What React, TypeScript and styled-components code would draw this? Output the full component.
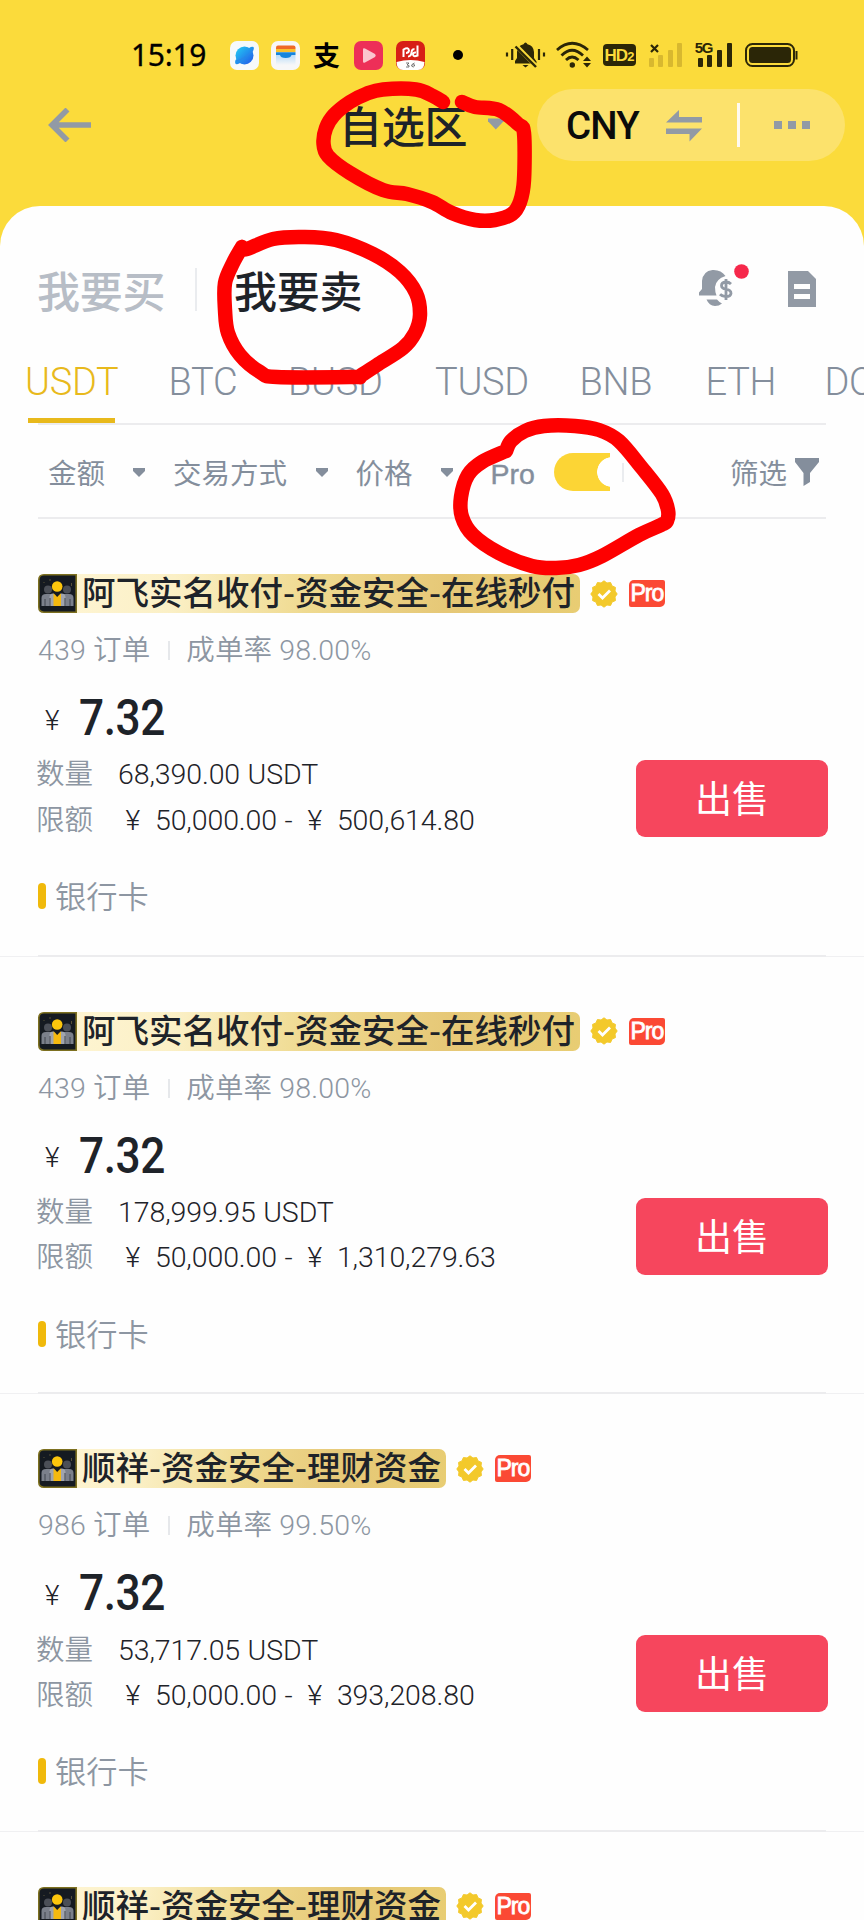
import React from 'react';
import styled, { createGlobalStyle } from 'styled-components';

const latin = `Roboto, "Noto Sans CJK SC", sans-serif`;
const cjk = `"Noto Sans CJK SC", sans-serif`;

const GlobalStyle = createGlobalStyle`
  * { box-sizing: border-box; }
  body { margin: 0; background: #fbdb3b; }
`;

const Screen = styled.div`
  position: relative;
  width: 864px;
  height: 1920px;
  overflow: hidden;
  background: #fbdb3b;
  font-family: ${latin};
  color: #1e2329;
  white-space: nowrap;
`;

/* ---------- status bar ---------- */
const StatusBar = styled.div`
  display: flex;
  align-items: center;
  height: 72px;
  padding: 38px 0 0 131px;
`;
const Clock = styled.div`
  width: 98.5px;
  font: 400 30px/34px "Noto Sans", sans-serif;
  -webkit-text-stroke: 0.3px #000;
  letter-spacing: -0.3px;
  color: #000;
`;
const StatusIcon = styled.svg<{ $gap?: number }>`
  flex: none;
  display: block;
  overflow: visible;
  margin-left: ${(p) => p.$gap ?? 0}px;
`;
const NoSim = styled.svg`
  position: absolute;
  left: 1px;
  top: 1px;
`;
const PayGlyph = styled.div`
  width: 30px;
  margin-left: 13px;
  font: 700 27px/30px ${cjk};
  color: #000;
`;
const HdBadge = styled.div`
  display: flex;
  align-items: baseline;
  justify-content: center;
  width: 33px;
  height: 22px;
  margin-left: 11px;
  border-radius: 4px;
  background: #2b2607;
  color: #fbdb3b;
  font: 700 17px/23px "Liberation Sans", sans-serif;
  letter-spacing: -1px;
`;
const HdDigit = styled.span`
  font-size: 13px;
`;
const Signal = styled.div<{ $dim?: boolean; $gap: number }>`
  position: relative;
  display: flex;
  align-items: flex-end;
  gap: 4.6px;
  height: 24px;
  margin-left: ${(p) => p.$gap}px;
  color: ${(p) => (p.$dim ? '#d8b82f' : '#2b2607')};
`;
const Bar = styled.i<{ $h: number }>`
  width: 5px;
  height: ${(p) => p.$h}px;
  border-radius: 1px;
  background: currentColor;
`;
const SignalTag = styled.span`
  position: absolute;
  left: -3px;
  top: -2px;
  font: 700 15px/14px "Liberation Sans", sans-serif;
  letter-spacing: -1.4px;
  color: #2b2607;
`;

/* ---------- header ---------- */
const Header = styled.div`
  display: flex;
  align-items: center;
  height: 134px;
  padding: 0 19px 28px 48px;
`;
const Title = styled.div`
  display: flex;
  align-items: center;
  width: 165px;
  height: 52px;
  margin-left: 248px;
  padding-bottom: 3px;
  gap: 21px;
  font: 500 43px/50px ${cjk};
  letter-spacing: -0.2px;
`;
const Pill = styled.div`
  display: flex;
  align-items: center;
  width: 308px;
  height: 72px;
  margin-left: auto;
  padding-left: 29px;
  border-radius: 36px;
  background: #fce26c;
`;
const Currency = styled.div`
  width: 98.5px;
  padding-top: 2px;
  font: 500 38.5px/70px ${latin};
  letter-spacing: -0.8px;
  color: #0b0b0b;
`;
const PillRule = styled.i`
  width: 3px;
  height: 44px;
  margin-left: 34px;
  background: #fffaf0;
`;
const Dots = styled.div`
  display: flex;
  gap: 6px;
  margin-left: 34.5px;
`;
const Dot = styled.i`
  width: 8px;
  height: 8px;
  background: #929aa5;
`;

/* ---------- sheet ---------- */
const Sheet = styled.main`
  height: 1714px;
  border-radius: 40px 40px 0 0;
  background: #fefefe;
`;
const SideTabs = styled.div`
  display: flex;
  align-items: center;
  height: 138px;
  padding: 28px 48px 0 37px;
`;
const SideTab = styled.div<{ $on?: boolean }>`
  width: 128px;
  font: 500 43px/50px ${cjk};
  letter-spacing: -0.2px;
  color: ${(p) => (p.$on ? '#1e2329' : '#b7bdc6')};
`;
const SideRule = styled.i`
  width: 2px;
  height: 43px;
  margin: 0 37px 0 30px;
  background: #eaecef;
`;
const SideIcons = styled.div`
  display: flex;
  align-items: flex-start;
  gap: 37px;
  margin: -7px 0 0 auto;
`;
const DocIcon = styled.svg`
  margin-top: 7px;
`;
const CoinTabs = styled.div`
  display: flex;
  height: 79px;
  padding-left: 25px;
`;
const CoinTab = styled.div<{ $on?: boolean; $w: number }>`
  flex: none;
  width: ${(p) => p.$w}px;
  padding-top: 16px;
  font: 300 38px/44px ${latin};
  letter-spacing: -0.3px;
  color: ${(p) => (p.$on ? '#e8b91c' : '#848e9c')};
`;
const Underline = styled.i`
  display: block;
  width: 87px;
  height: 5px;
  margin: 14px 0 0 3px;
  background: #e8b91c;
`;
const Rule = styled.hr`
  height: 2px;
  margin: 0 38px;
  border: 0;
  background: #ececee;
`;
const Filters = styled.div`
  display: flex;
  align-items: center;
  height: 92px;
  padding: 2px 45px 0 48px;
  font: 400 28.5px/40px ${cjk};
  color: #848e9c;
`;
const Filter = styled.div<{ $w: number }>`
  display: flex;
  align-items: center;
  justify-content: space-between;
  width: ${(p) => p.$w}px;
  margin-right: 28px;
`;
const ProLabel = styled.div`
  width: 63px;
  margin-left: 10px;
  padding-top: 4px;
  font: 400 28.5px/40px "Liberation Sans", sans-serif;
  -webkit-text-stroke: 0.4px #848e9c;
`;
const Toggle = styled.div`
  width: 56px;
  height: 38px;
  border-radius: 19px 0 0 19px;
  background: radial-gradient(circle at 58px 19px, #fff 14.5px, #fcd535 15.2px);
`;
const FilterRule = styled.i`
  width: 2px;
  height: 19px;
  margin-left: 12px;
  background: #eaecef;
`;
const FilterButton = styled.div`
  display: flex;
  align-items: center;
  gap: 8px;
  margin-left: auto;
`;

/* ---------- offers ---------- */
const Offer = styled.section`
  height: 437.67px;
  padding: 55px 36px 0 38px;
  border-bottom: 1px solid #f0f0f2;
`;
const NameRow = styled.div`
  display: flex;
  align-items: center;
  height: 39px;
`;
const NameBadge = styled.div`
  display: flex;
  align-items: center;
  height: 39px;
  padding-right: 5.5px;
  border-radius: 7px;
  background: linear-gradient(100deg, #fff6d6 0%, #fbf0c6 25%, #efda90 50%, #e6c877 75%, #e8cd73 100%);
`;
const Name = styled.span`
  height: 39px;
  font: 500 33.5px/33px ${cjk};
`;
const BadgeIcon = styled.svg`
  flex: none;
  margin-right: 5px;
`;
const Verified = styled.svg`
  margin-left: 10px;
`;
const ProTag = styled.span`
  width: 36px;
  height: 27px;
  margin-left: 10.5px;
  border-radius: 5px 2px 5px 2px;
  background: #fb4934;
  color: #fff;
  text-align: center;
  font: 400 23px/27px "Liberation Sans", sans-serif;
  -webkit-text-stroke: 0.8px #fff;
  letter-spacing: -1px;
`;
const Stats = styled.div`
  display: flex;
  align-items: center;
  height: 41px;
  margin-top: 17px;
  font: 350 28.5px/41px ${latin};
  letter-spacing: 0.15px;
  color: #8d96a2;
`;
const StatRule = styled.i`
  width: 2px;
  height: 19px;
  margin: 0 16px 0 18px;
  background: #e6e8eb;
`;
const Price = styled.div`
  display: flex;
  align-items: center;
  height: 58px;
  margin-top: 18px;
  padding-left: 7px;
`;
const Yen = styled.span`
  width: 34px;
  font: 350 28px/50px ${latin};
  padding-top: 5px;
`;
const PriceValue = styled.span`
  font: 500 50.5px/58px ${latin};
  letter-spacing: -0.5px;
  transform: scaleX(0.875);
  transform-origin: left;
`;
const Body = styled.div`
  display: flex;
  justify-content: space-between;
  margin: 5px 0 0 -2px;
`;
const Fact = styled.div`
  display: flex;
  align-items: center;
  height: 45.5px;
  font: 350 28.5px/45px ${latin};
`;
const FactLabel = styled.span`
  width: 82px;
  color: #8d96a2;
`;
const Amount = styled.span`
  letter-spacing: -0.1px;
  word-spacing: 0.6px;
  white-space: pre;
`;
const SellButton = styled.button`
  width: 192px;
  height: 77px;
  margin-top: 8px;
  padding: 0 0 3px;
  border: 0;
  border-radius: 9px;
  background: #f6465d;
  color: #fff;
  font: 400 37px/74px ${cjk};
`;
const Payment = styled.div`
  display: flex;
  align-items: center;
  height: 40px;
  margin-top: 33px;
  font: 350 31.2px/37px ${cjk};
  color: #8d96a2;
`;
const PaymentName = styled.span`
  height: 40px;
`;
const PaymentMark = styled.i`
  width: 8px;
  height: 26px;
  margin-right: 9px;
  border-radius: 4px;
  background: #f0b90b;
`;
const OfferRule = styled.hr`
  width: 788px;
  height: 2px;
  margin: 38.5px 0 0;
  border: 0;
  background: #ececee;
`;

/* ---------- hand-drawn marks ---------- */
const Marks = styled.svg`
  position: absolute;
  inset: 0;
  pointer-events: none;
`;

type Pt = [number, number];
const smooth = (p: Pt[]) =>
  p.slice(0, -1).reduce((d, b, i) => {
    const a = p[i - 1] ?? b;
    const c = p[i + 1];
    const e = p[i + 2] ?? c;
    return `${d}C${b[0] + (c[0] - a[0]) / 6} ${b[1] + (c[1] - a[1]) / 6} ${c[0] - (e[0] - b[0]) / 6} ${c[1] - (e[1] - b[1]) / 6} ${c[0]} ${c[1]}`;
  }, `M${p[0][0]} ${p[0][1]}`);

const strokes: Pt[][] = [
  [[443, 102], [433, 96], [416, 89.5], [383, 89.5], [366, 94], [350, 102], [334, 115], [326, 128], [323.5, 143], [328, 156], [350, 173], [383, 190], [407, 194], [432, 202], [452, 213], [475, 220], [495, 220], [512, 214], [520, 202], [524, 180], [524, 133], [518, 124], [499, 110], [475, 107], [462, 102]],
  [[242, 247], [247, 249], [273, 239], [303, 237], [336, 240], [373, 254], [400, 272], [416, 293], [420, 315], [415, 333], [403, 348], [377, 365], [360, 376], [353, 377], [277, 377], [260, 372], [240, 355], [228, 333], [225, 310], [225, 283], [233, 263], [242, 247]],
  [[506, 451], [511, 441], [525, 431], [544, 426], [575, 426], [599, 430], [619, 441], [642, 468], [662, 494], [668, 510], [667, 521], [661, 525], [639, 535], [602, 556], [579, 565], [556, 568], [532, 566], [499, 553], [473, 535], [462, 517], [461, 497], [468, 475], [482, 462], [506, 451]],
];

const Caret = () => (
  <svg width="12" height="9" viewBox="0 0 12 9">
    <path d="M0 0H12V3L6 9L0 3Z" fill="currentColor" />
  </svg>
);

const PeopleIcon = () => (
  <BadgeIcon width="39" height="39" viewBox="0 0 39 39">
    <path d="M38.200 0.800H6Q0.800 0.800 0.800 6V33Q0.800 38.200 6 38.200H38.200Z" fill="#151a21" stroke="#7d7020" strokeWidth="1.600" />
    <circle cx="10" cy="15.500" r="4" fill="#4b4f57" />
    <circle cx="29" cy="15.500" r="4" fill="#4b4f57" />
    <path d="M3.500 32V24Q3.500 20 8 20H14V32ZM25 32V20H31Q35.500 20 35.500 24V32Z" fill="#7b808b" />
    <path d="M11.500 32V23.500Q11.500 19.500 15 19.500H23.500Q27.500 19.500 27.500 23.500V32Z" fill="#a0a4ad" />
    <path d="M15.500 32V19.500H23V32Z" fill="#f5b90f" />
    <path d="M15.500 19L19.200 23L23 19Z" fill="#151a21" />
    <path d="M7 25V32M32 25V32M12 24V32M27 24V32" stroke="#3a3e47" strokeWidth="0.9" />
    <circle cx="19.200" cy="12.500" r="5.300" fill="#fdc60c" />
    <path d="M12 5v2M33.500 9v3M6 8v1" stroke="#565038" strokeWidth="1" />
  </BadgeIcon>
);

const scallop = Array.from({ length: 24 }, (_, i) => {
  const r = i % 2 ? 11.4 : 13.2;
  const a = (i * Math.PI) / 12;
  return `${14 + r * Math.sin(a)},${14 - r * Math.cos(a)}`;
}).join(' ');

const VerifiedIcon = () => (
  <Verified width="28" height="28" viewBox="0 0 28 28">
    <polygon points={scallop} fill="#f3c92b" stroke="#f3c92b" strokeLinejoin="round" />
    <path d="M8.500 14L12.500 18L20 10.500" fill="none" stroke="#fff" strokeWidth="2.800" />
  </Verified>
);

interface OfferData {
  name: string;
  orders: string;
  rate: string;
  amount: string;
  max: string;
}
const offers: OfferData[] = [
  { name: '阿飞实名收付-资金安全-在线秒付', orders: '439', rate: '98.00%', amount: '68,390.00', max: '500,614.80' },
  { name: '阿飞实名收付-资金安全-在线秒付', orders: '439', rate: '98.00%', amount: '178,999.95', max: '1,310,279.63' },
  { name: '顺祥-资金安全-理财资金', orders: '986', rate: '99.50%', amount: '53,717.05', max: '393,208.80' },
];
const nextOffer = '顺祥-资金安全-理财资金';

const OfferName = ({ name }: { name: string }) => (
  <NameRow>
    <NameBadge>
      <PeopleIcon />
      <Name>{name}</Name>
    </NameBadge>
    <VerifiedIcon />
    <ProTag>Pro</ProTag>
  </NameRow>
);

const OfferCard = ({ o }: { o: OfferData }) => (
  <Offer>
    <OfferName name={o.name} />
    <Stats>
      {o.orders} 订单
      <StatRule />
      成单率 {o.rate}
    </Stats>
    <Price>
      <Yen>¥</Yen>
      <PriceValue>7.32</PriceValue>
    </Price>
    <Body>
      <div>
        <Fact>
          <FactLabel>数量</FactLabel>
          <Amount>{o.amount} USDT</Amount>
        </Fact>
        <Fact>
          <FactLabel>限额</FactLabel>
          <Amount>{` ¥  50,000.00 -  ¥  ${o.max}`}</Amount>
        </Fact>
      </div>
      <SellButton>出售</SellButton>
    </Body>
    <Payment>
      <PaymentMark />
      <PaymentName>银行卡</PaymentName>
    </Payment>
    <OfferRule />
  </Offer>
);

const coins: [string, number][] = [
  ['USDT', 143.5], ['BTC', 119.5], ['BUSD', 147], ['TUSD', 144.5], ['BNB', 126], ['ETH', 119], ['DO', 60],
];

export default function App() {
  return (
    <Screen>
      <GlobalStyle />
      <StatusBar>
        <Clock>15:19</Clock>
        <StatusIcon width="29" height="29" viewBox="0 0 29 29">
          <defs>
            <linearGradient id="planet" x1="0" y1="0" x2="1" y2="1">
              <stop offset="0" stopColor="#24d0f3" />
              <stop offset="1" stopColor="#2054e8" />
            </linearGradient>
          </defs>
          <rect width="29" height="29" rx="7" fill="#f6f9fb" />
          <circle cx="14.500" cy="14.500" r="9" fill="url(#planet)" />
          <path d="M5.500 19Q4 24 8 23Q16 20 20.500 14Q25 8 23.500 6Q22 5 19 7" fill="url(#planet)" />
          <path d="M6 20Q15 18 23 9" stroke="#2b86e8" strokeWidth="1" fill="none" />
        </StatusIcon>
        <StatusIcon $gap={12.5} width="29" height="29" viewBox="0 0 29 29">
          <defs>
            <linearGradient id="mist" x1="0" y1="0" x2="0" y2="1">
              <stop offset="0" stopColor="#b9dcf8" />
              <stop offset="1" stopColor="#f7f7f8" />
            </linearGradient>
          </defs>
          <rect width="29" height="29" rx="7" fill="#f7f7f8" />
          <path d="M5 14H24.500V24H5Z" fill="url(#mist)" />
          <path d="M5 8V6.500Q5 4.500 7 4.500H22.500Q24.500 4.500 24.500 6.500V8Z" fill="#ef6a26" />
          <rect x="5" y="8" width="19.500" height="3.200" fill="#f8c12c" />
          <path d="M5 11.200H24.500V14H20.500Q20 17 14.700 17Q9.500 17 9 14H5Z" fill="#1685dc" />
        </StatusIcon>
        <PayGlyph>支</PayGlyph>
        <StatusIcon $gap={11} width="29" height="29" viewBox="0 0 29 29">
          <rect width="29" height="29" rx="7" fill="#ed2f58" />
          <path d="M9 8.500Q9 6.500 11 7.500L21 13Q22.500 14.500 21 16L11 21.500Q9 22.500 9 20.500Z" fill="#fbc5cf" />
        </StatusIcon>
        <StatusIcon $gap={13} width="29" height="29" viewBox="0 0 29 29">
          <rect width="29" height="29" rx="7" fill="#d71f16" />
          <path d="M0.500 21Q14.500 17 28.500 21Q28 29 22 29H7Q1 29 0.500 21Z" fill="#fff" />
          <path d="M7.500 16V8.500Q12.500 5.500 13 9.500Q12.500 12 10 12M12 15.500Q15 15.500 15.500 11.500Q16 7.500 18.500 8.500M21.500 4.500V14.500Q17 16.500 17 13Q17.500 11 20 11.500" fill="none" stroke="#fff" strokeWidth="2" />
          <path d="M10 22h3l-2 2q3 0 2 2h-3M18.500 22q-3 1-3 3q2 2 3 0t-2-1" fill="none" stroke="#555" strokeWidth="0.8" />
        </StatusIcon>
        <StatusIcon $gap={27.5} width="10" height="10" viewBox="0 0 10 10">
          <circle cx="5" cy="5" r="5" fill="#000" />
        </StatusIcon>
        <StatusIcon $gap={43} width="39" height="28" viewBox="0 0 39 28">
          <path d="M9 21.500V20L11 17V11Q11.500 4.500 17.500 3.200Q19.500 0 21.500 3.200Q27.500 4.500 28 11V17L30.500 20.500V22.500H9Z" fill="#2b2607" />
          <path d="M16.500 24H22.500L19.500 26.500Z" fill="#2b2607" />
          <path d="M10 4.500L31 26" stroke="#fbdb3b" strokeWidth="4.500" />
          <path d="M9.500 5.500L30 26" stroke="#2b2607" strokeWidth="2.400" />
          <path d="M6.200 8V19M1 11.500V15.500M33 8V19M38 11.500V15.500" stroke="#2b2607" strokeWidth="2.200" />
        </StatusIcon>
        <StatusIcon $gap={11} width="36" height="28" viewBox="0 0 36 28">
          <g fill="none" stroke="#2b2607" strokeWidth="2.800">
            <path d="M1 9Q16 -4.500 32 9" />
            <path d="M5.500 14.500Q16 4 27 14.500" />
            <path d="M10 19Q16 13 22.500 19" />
          </g>
          <circle cx="16.300" cy="24" r="2.700" fill="#2b2607" />
          <path d="M27 20L31 15.500L35 20ZM27 22L31 26.500L35 22Z" fill="#2b2607" />
        </StatusIcon>
        <HdBadge>HD<HdDigit>2</HdDigit></HdBadge>
        <Signal $dim $gap={13}>
          <Bar $h={9} /><Bar $h={12} /><Bar $h={17.5} /><Bar $h={24} />
          <NoSim width="9" height="9" viewBox="0 0 9 9">
            <path d="M1 1L8 8M8 1L1 8" stroke="#2b2607" strokeWidth="2.200" />
          </NoSim>
        </Signal>
        <Signal $gap={15.5}>
          <Bar $h={9} /><Bar $h={12} /><Bar $h={17.5} /><Bar $h={24} />
          <SignalTag>5G</SignalTag>
        </Signal>
        <StatusIcon $gap={13} width="53" height="24" viewBox="0 0 53 24">
          <rect x="1" y="1" width="48" height="22" rx="6.500" fill="none" stroke="#2b2607" strokeWidth="2" />
          <rect x="4" y="4" width="42" height="16" rx="3.500" fill="#2b2607" />
          <path d="M51.500 8V16.500" stroke="#2b2607" strokeWidth="2" />
        </StatusIcon>
      </StatusBar>

      <Header>
        <svg width="43" height="34" viewBox="0 0 43 34">
          <path d="M19.500 1.500L4 17L19.500 32.500M4 17H43" fill="none" stroke="#929aa5" strokeWidth="5.600" />
        </svg>
        <Title>
          自选区
          <svg width="17" height="12" viewBox="0 0 17 12">
            <path d="M0 0H17V3L8.500 12L0 3Z" fill="#929aa5" />
          </svg>
        </Title>
        <Pill>
          <Currency>CNY</Currency>
          <svg width="38" height="33" viewBox="0 0 38 33">
            <path d="M1 13.500L14 1V8H37V13.500ZM1 19.500H37L24.500 32.500V25H1Z" fill="#929aa5" />
          </svg>
          <PillRule />
          <Dots><Dot /><Dot /><Dot /></Dots>
        </Pill>
      </Header>

      <Sheet>
        <SideTabs>
          <SideTab>我要买</SideTab>
          <SideRule />
          <SideTab $on>我要卖</SideTab>
          <SideIcons>
            <svg width="52" height="44" viewBox="0 0 52 44">
              <path d="M0 31.500V28.500L3 25V17Q4 7 13.500 6Q22 5.500 26.500 12Q17 15 16 23Q16 28 17.500 31.500Z" fill="#929aa5" />
              <path d="M7.500 35.500H18Q20 38 23 39.500Q20 42 16 42Q10 41.500 7.500 35.500Z" fill="#929aa5" />
              <path d="M32 20Q30 18 26.800 18Q22.500 18.500 22.500 21.500Q22.500 24.500 27 25.200Q32 26 32 29.500Q31.500 32.500 27 32.700Q23 32.500 21 30.300M27 15V36" fill="none" stroke="#929aa5" strokeWidth="2.800" />
              <circle cx="42.500" cy="7.500" r="7.300" fill="#f6284b" />
            </svg>
            <DocIcon width="28" height="36" viewBox="0 0 28 36">
              <path d="M0 0H20L28 8V36H0ZM6 13V18H22V13ZM6 23V28H22V23Z" fill="#929aa5" fillRule="evenodd" />
            </DocIcon>
          </SideIcons>
        </SideTabs>

        <CoinTabs>
          {coins.map(([c, w], i) => (
            <CoinTab key={c} $w={w} $on={i === 0}>
              {c}
              {i === 0 && <Underline />}
            </CoinTab>
          ))}
        </CoinTabs>
        <Rule />
        <Filters>
          <Filter $w={97}>金额<Caret /></Filter>
          <Filter $w={154.5}>交易方式<Caret /></Filter>
          <Filter $w={97}>价格<Caret /></Filter>
          <ProLabel>Pro</ProLabel>
          <Toggle />
          <FilterRule />
          <FilterButton>
            筛选
            <svg width="24" height="28" viewBox="0 0 24 28">
              <path d="M0 0H24V4L15 15V24L8.500 28V15L0 4Z" fill="#848e9c" />
            </svg>
          </FilterButton>
        </Filters>
        <Rule />
        {offers.map((o, i) => <OfferCard key={i} o={o} />)}
        <Offer>
          <OfferName name={nextOffer} />
        </Offer>
      </Sheet>

      <Marks width="864" height="1920" viewBox="0 0 864 1920">
        {strokes.map((s, i) => (
          <path key={i} d={smooth(s)} fill="none" stroke="#fe0000" strokeWidth="14.500" strokeLinecap="round" strokeLinejoin="round" />
        ))}
      </Marks>
    </Screen>
  );
}
